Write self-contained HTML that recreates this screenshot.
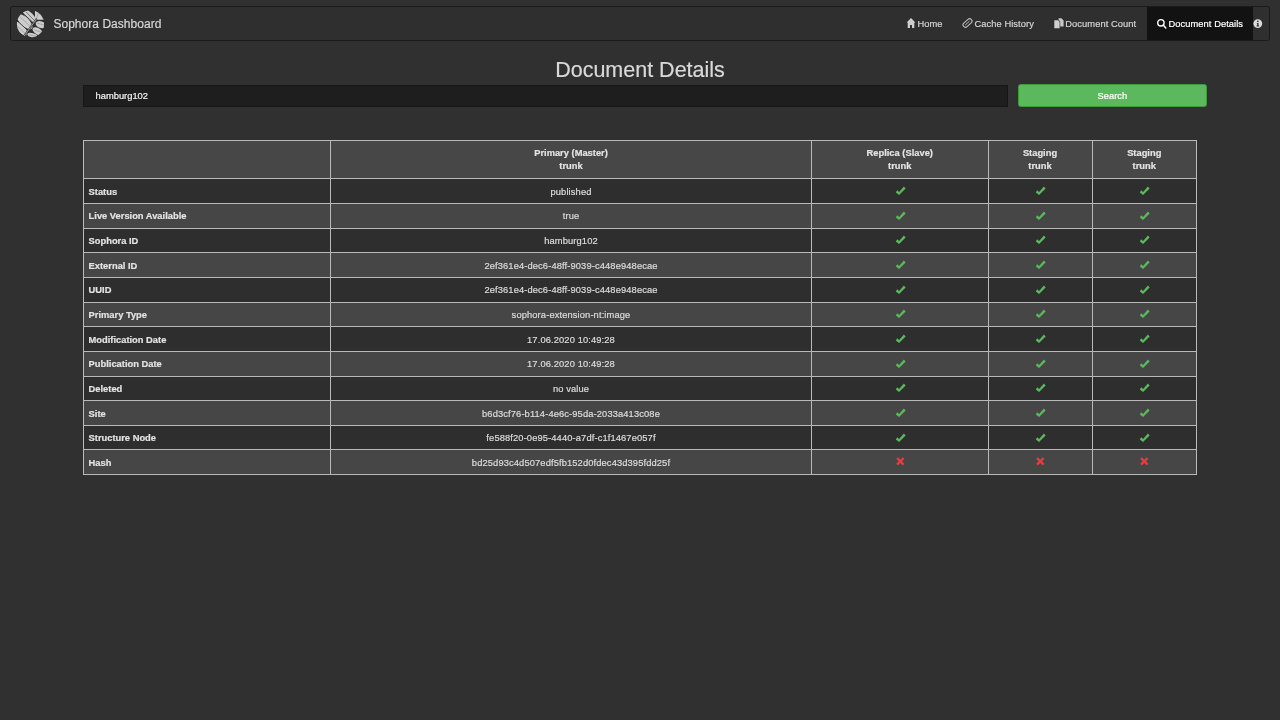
<!DOCTYPE html>
<html><head><meta charset="utf-8"><title>Sophora Dashboard</title><style>
*{margin:0;padding:0;box-sizing:border-box}
html,body{width:1280px;height:720px;overflow:hidden;background:#303030;font-family:"Liberation Sans",sans-serif}
.a{position:absolute;white-space:nowrap;-webkit-text-stroke:0.2px currentColor}
</style></head><body><div id="w" style="position:absolute;left:0;top:0;width:1280px;height:720px;will-change:transform">
<div class="a" style="left:10px;top:6px;width:1260px;height:35px;border:1px solid #1a1a1a;border-radius:2.67px;background:#2f2f2f"></div>
<div class="a" style="left:1147px;top:7px;width:106px;height:33px;background:#121212"></div>
<svg class="a" style="left:14px;top:8px" width="34" height="32" viewBox="0 0 34 32">
<defs><clipPath id="cc"><circle cx="16.5" cy="15.9" r="13.6"/></clipPath></defs>
<g clip-path="url(#cc)" stroke-linecap="round">
<g fill="#cdcdcd">
<ellipse cx="15.4" cy="7.8" rx="9" ry="3.4" transform="rotate(44 15.4 7.8)"/>
<ellipse cx="10.6" cy="13.6" rx="10" ry="4.3" transform="rotate(43 10.6 13.6)"/>
<ellipse cx="7.0" cy="20.6" rx="8.5" ry="3.9" transform="rotate(48 7.0 20.6)"/>
<path d="M21.1 11.7 L20.9 2 L32 2 L32 11.7 Z"/>
<ellipse cx="26.8" cy="16.6" rx="5.2" ry="3.3" transform="rotate(18 26.8 16.6)"/>
<ellipse cx="23.6" cy="23.2" rx="5.6" ry="3.1" transform="rotate(30 23.6 23.2)"/>
<ellipse cx="18.4" cy="27.3" rx="5" ry="2.2" transform="rotate(14 18.4 27.3)"/>
</g>
<g stroke="#2f2f2f" stroke-width="0.9" fill="none">
<path d="M7.6 4.0 L19.8 15.3"/>
<path d="M2.6 12.2 L13.8 22.6"/>
</g>
<g stroke="#5a5a5a" stroke-width="0.75" fill="none">
<path d="M12.3 4.1 L20.1 12.2"/>
</g>
<g stroke="#8a8a8a" stroke-width="0.6" fill="none">
<path d="M6.2 9.1 L16.5 18.6"/>
<path d="M2.8 17.5 L10.8 25.2"/>
<path d="M23.5 15.3 L30 17.0"/>
<path d="M20.5 22.0 L28 24.4"/>
<path d="M15.5 26.9 L22 28.3"/>
<path d="M22.3 11 L24.6 4.5"/>
</g>
<path d="M9.8 28.6 L22.3 11.2" fill="none" stroke="#2f2f2f" stroke-width="1.9"/>
<path d="M9.8 28.6 L22.3 11.2" fill="none" stroke="#bcbcbc" stroke-width="0.8"/>
</g></svg>
<div class="a" style="left:53.4px;top:16.59px;font-size:12px;line-height:14px;letter-spacing:0.04px;color:#d6d6d6">Sophora Dashboard</div>
<div class="a" style="left:917.5px;top:18.02px;font-size:9.33px;line-height:12px;letter-spacing:0.06px;color:#d2d2d2">Home</div>
<div class="a" style="left:974.5px;top:18.02px;font-size:9.33px;line-height:12px;letter-spacing:0.06px;color:#d2d2d2">Cache History</div>
<div class="a" style="left:1065.3px;top:18.02px;font-size:9.33px;line-height:12px;letter-spacing:0.06px;color:#d2d2d2">Document Count</div>
<div class="a" style="left:1168.5px;top:18.02px;font-size:9.33px;line-height:12px;letter-spacing:0.06px;color:#ffffff">Document Details</div>
<svg class="a" style="left:906px;top:18px" width="10" height="10" viewBox="0 0 10 10">
<path d="M5 0 L9.4 4.6 L8.3 4.6 L8.3 10 L6 10 L6 7 L4 7 L4 10 L1.7 10 L1.7 4.6 L0.6 4.6 Z" fill="#cfcfcf"/></svg>
<svg class="a" style="left:962px;top:17.5px" width="11" height="10" viewBox="0 0 11 10">
<g transform="rotate(-42 5.5 5)"><rect x="0.3" y="2.6" width="10.4" height="4.8" rx="2.4" fill="none" stroke="#bdbdbd" stroke-width="1.1"/>
<line x1="2.4" y1="5" x2="8.2" y2="5" stroke="#bdbdbd" stroke-width="0.9"/></g></svg>
<svg class="a" style="left:1053.5px;top:17.8px" width="10" height="11" viewBox="0 0 10 11">
<path d="M0.3 2.3 H4.2 L5.6 3.7 V10.2 H0.3 Z" fill="#d0d0d0"/>
<path d="M4.6 0.2 H7.4 L9.6 2.4 V8.4 H6.2 V3.3 L4.6 1.8 Z" fill="#c8c8c8"/></svg>
<svg class="a" style="left:1156px;top:17.5px" width="11" height="11" viewBox="0 0 11 11">
<circle cx="4.9" cy="4.8" r="3.2" fill="none" stroke="#ffffff" stroke-width="1.4"/>
<line x1="7.2" y1="7.1" x2="9.8" y2="9.9" stroke="#ffffff" stroke-width="1.5" stroke-linecap="round"/></svg>
<svg class="a" style="left:1253px;top:19px" width="10" height="10" viewBox="0 0 10 10">
<circle cx="4.8" cy="4.6" r="4.4" fill="#dcdcdc"/>
<circle cx="4.8" cy="2.4" r="0.8" fill="#2f2f2f"/>
<path d="M3.7 3.9 H5.5 V6.6 H6.1 V7.4 H3.6 V6.6 H4.2 V4.6 H3.7 Z" fill="#2f2f2f"/></svg>
<div class="a" style="left:0;width:1280px;text-align:center;top:57.51px;font-size:21.5px;line-height:24px;color:#d9d9d9;padding-left:0px">Document Details</div>
<div class="a" style="left:83px;top:84.6px;width:925px;height:22.2px;background:#1e1e1e;border:0.67px solid #161616"></div>
<div class="a" style="left:95.6px;top:89.87px;font-size:9.33px;line-height:12px;color:#f2f2f2">hamburg102</div>
<div class="a" style="left:1017.6px;top:84.3px;width:189.5px;height:22.8px;background:#5cb85c;border:0.67px solid #3f9a3f;border-radius:2.67px"></div>
<div class="a" style="left:1017.6px;width:189.5px;text-align:center;top:89.77px;font-size:9.33px;line-height:12px;color:#ffffff">Search</div>
<div class="a" style="left:83px;top:140.8px;width:1113.5px;height:37.869999999999976px;background:#474747"></div>
<div class="a" style="left:83px;top:178.67px;width:1113.5px;height:25.16px;background:#2e2e2e"></div>
<div class="a" style="left:83px;top:203.33px;width:1113.5px;height:25.16px;background:#464646"></div>
<div class="a" style="left:83px;top:227.99px;width:1113.5px;height:25.16px;background:#2e2e2e"></div>
<div class="a" style="left:83px;top:252.65px;width:1113.5px;height:25.16px;background:#464646"></div>
<div class="a" style="left:83px;top:277.31px;width:1113.5px;height:25.16px;background:#2e2e2e"></div>
<div class="a" style="left:83px;top:301.97px;width:1113.5px;height:25.16px;background:#464646"></div>
<div class="a" style="left:83px;top:326.63px;width:1113.5px;height:25.16px;background:#2e2e2e"></div>
<div class="a" style="left:83px;top:351.29px;width:1113.5px;height:25.16px;background:#464646"></div>
<div class="a" style="left:83px;top:375.95px;width:1113.5px;height:25.16px;background:#2e2e2e"></div>
<div class="a" style="left:83px;top:400.61px;width:1113.5px;height:25.16px;background:#464646"></div>
<div class="a" style="left:83px;top:425.27px;width:1113.5px;height:25.16px;background:#2e2e2e"></div>
<div class="a" style="left:83px;top:449.93px;width:1113.5px;height:25.16px;background:#464646"></div>
<div class="a" style="left:83px;top:140px;width:1114px;height:1px;background:#b9b9b9"></div>
<div class="a" style="left:83px;top:178px;width:1114px;height:1px;background:#b9b9b9"></div>
<div class="a" style="left:83px;top:203px;width:1114px;height:1px;background:#b9b9b9"></div>
<div class="a" style="left:83px;top:228px;width:1114px;height:1px;background:#b9b9b9"></div>
<div class="a" style="left:83px;top:252px;width:1114px;height:1px;background:#b9b9b9"></div>
<div class="a" style="left:83px;top:277px;width:1114px;height:1px;background:#b9b9b9"></div>
<div class="a" style="left:83px;top:302px;width:1114px;height:1px;background:#b9b9b9"></div>
<div class="a" style="left:83px;top:326px;width:1114px;height:1px;background:#b9b9b9"></div>
<div class="a" style="left:83px;top:351px;width:1114px;height:1px;background:#b9b9b9"></div>
<div class="a" style="left:83px;top:376px;width:1114px;height:1px;background:#b9b9b9"></div>
<div class="a" style="left:83px;top:400px;width:1114px;height:1px;background:#b9b9b9"></div>
<div class="a" style="left:83px;top:425px;width:1114px;height:1px;background:#b9b9b9"></div>
<div class="a" style="left:83px;top:449px;width:1114px;height:1px;background:#b9b9b9"></div>
<div class="a" style="left:83px;top:474px;width:1114px;height:1px;background:#b9b9b9"></div>
<div class="a" style="left:83px;top:140px;width:1px;height:335px;background:#b9b9b9"></div>
<div class="a" style="left:330px;top:140px;width:1px;height:335px;background:#b9b9b9"></div>
<div class="a" style="left:811px;top:140px;width:1px;height:335px;background:#b9b9b9"></div>
<div class="a" style="left:988px;top:140px;width:1px;height:335px;background:#b9b9b9"></div>
<div class="a" style="left:1092px;top:140px;width:1px;height:335px;background:#b9b9b9"></div>
<div class="a" style="left:1196px;top:140px;width:1px;height:335px;background:#b9b9b9"></div>
<div class="a" style="left:330.5px;width:481.0px;text-align:center;top:147.37px;font-size:9.33px;line-height:12px;font-weight:bold;color:#e3e3e3">Primary (Master)</div>
<div class="a" style="left:330.5px;width:481.0px;text-align:center;top:160.47px;font-size:9.33px;line-height:12px;font-weight:bold;color:#e3e3e3">trunk</div>
<div class="a" style="left:811.5px;width:176.5px;text-align:center;top:147.37px;font-size:9.33px;line-height:12px;font-weight:bold;color:#e3e3e3">Replica (Slave)</div>
<div class="a" style="left:811.5px;width:176.5px;text-align:center;top:160.47px;font-size:9.33px;line-height:12px;font-weight:bold;color:#e3e3e3">trunk</div>
<div class="a" style="left:988px;width:104px;text-align:center;top:147.37px;font-size:9.33px;line-height:12px;font-weight:bold;color:#e3e3e3">Staging</div>
<div class="a" style="left:988px;width:104px;text-align:center;top:160.47px;font-size:9.33px;line-height:12px;font-weight:bold;color:#e3e3e3">trunk</div>
<div class="a" style="left:1092px;width:104.5px;text-align:center;top:147.37px;font-size:9.33px;line-height:12px;font-weight:bold;color:#e3e3e3">Staging</div>
<div class="a" style="left:1092px;width:104.5px;text-align:center;top:160.47px;font-size:9.33px;line-height:12px;font-weight:bold;color:#e3e3e3">trunk</div>
<div class="a" style="left:88.6px;top:185.57px;font-size:9.33px;line-height:12px;font-weight:bold;color:#e3e3e3">Status</div>
<div class="a" style="left:330.5px;width:481.0px;text-align:center;top:185.57px;font-size:9.33px;line-height:12px;letter-spacing:0.12px;color:#dcdcdc">published</div>
<div class="a" style="left:894.70px;top:186.00px;width:12px;height:10px;line-height:0"><svg width="12" height="10" viewBox="0 0 12 10"><path d="M0.85 6.4 L2.15 4.2 L4.15 6.0 L8.85 0.5 L10.65 2.4 L4.05 9.1 Z" fill="#5cb85c"/></svg></div>
<div class="a" style="left:1034.95px;top:186.00px;width:12px;height:10px;line-height:0"><svg width="12" height="10" viewBox="0 0 12 10"><path d="M0.85 6.4 L2.15 4.2 L4.15 6.0 L8.85 0.5 L10.65 2.4 L4.05 9.1 Z" fill="#5cb85c"/></svg></div>
<div class="a" style="left:1139.20px;top:186.00px;width:12px;height:10px;line-height:0"><svg width="12" height="10" viewBox="0 0 12 10"><path d="M0.85 6.4 L2.15 4.2 L4.15 6.0 L8.85 0.5 L10.65 2.4 L4.05 9.1 Z" fill="#5cb85c"/></svg></div>
<div class="a" style="left:88.6px;top:210.23px;font-size:9.33px;line-height:12px;font-weight:bold;color:#e3e3e3">Live Version Available</div>
<div class="a" style="left:330.5px;width:481.0px;text-align:center;top:210.23px;font-size:9.33px;line-height:12px;letter-spacing:0.12px;color:#dcdcdc">true</div>
<div class="a" style="left:894.70px;top:210.66px;width:12px;height:10px;line-height:0"><svg width="12" height="10" viewBox="0 0 12 10"><path d="M0.85 6.4 L2.15 4.2 L4.15 6.0 L8.85 0.5 L10.65 2.4 L4.05 9.1 Z" fill="#5cb85c"/></svg></div>
<div class="a" style="left:1034.95px;top:210.66px;width:12px;height:10px;line-height:0"><svg width="12" height="10" viewBox="0 0 12 10"><path d="M0.85 6.4 L2.15 4.2 L4.15 6.0 L8.85 0.5 L10.65 2.4 L4.05 9.1 Z" fill="#5cb85c"/></svg></div>
<div class="a" style="left:1139.20px;top:210.66px;width:12px;height:10px;line-height:0"><svg width="12" height="10" viewBox="0 0 12 10"><path d="M0.85 6.4 L2.15 4.2 L4.15 6.0 L8.85 0.5 L10.65 2.4 L4.05 9.1 Z" fill="#5cb85c"/></svg></div>
<div class="a" style="left:88.6px;top:234.89px;font-size:9.33px;line-height:12px;font-weight:bold;color:#e3e3e3">Sophora ID</div>
<div class="a" style="left:330.5px;width:481.0px;text-align:center;top:234.89px;font-size:9.33px;line-height:12px;letter-spacing:0.12px;color:#dcdcdc">hamburg102</div>
<div class="a" style="left:894.70px;top:235.32px;width:12px;height:10px;line-height:0"><svg width="12" height="10" viewBox="0 0 12 10"><path d="M0.85 6.4 L2.15 4.2 L4.15 6.0 L8.85 0.5 L10.65 2.4 L4.05 9.1 Z" fill="#5cb85c"/></svg></div>
<div class="a" style="left:1034.95px;top:235.32px;width:12px;height:10px;line-height:0"><svg width="12" height="10" viewBox="0 0 12 10"><path d="M0.85 6.4 L2.15 4.2 L4.15 6.0 L8.85 0.5 L10.65 2.4 L4.05 9.1 Z" fill="#5cb85c"/></svg></div>
<div class="a" style="left:1139.20px;top:235.32px;width:12px;height:10px;line-height:0"><svg width="12" height="10" viewBox="0 0 12 10"><path d="M0.85 6.4 L2.15 4.2 L4.15 6.0 L8.85 0.5 L10.65 2.4 L4.05 9.1 Z" fill="#5cb85c"/></svg></div>
<div class="a" style="left:88.6px;top:259.55px;font-size:9.33px;line-height:12px;font-weight:bold;color:#e3e3e3">External ID</div>
<div class="a" style="left:330.5px;width:481.0px;text-align:center;top:259.55px;font-size:9.33px;line-height:12px;letter-spacing:0.12px;color:#dcdcdc">2ef361e4-dec6-48ff-9039-c448e948ecae</div>
<div class="a" style="left:894.70px;top:259.98px;width:12px;height:10px;line-height:0"><svg width="12" height="10" viewBox="0 0 12 10"><path d="M0.85 6.4 L2.15 4.2 L4.15 6.0 L8.85 0.5 L10.65 2.4 L4.05 9.1 Z" fill="#5cb85c"/></svg></div>
<div class="a" style="left:1034.95px;top:259.98px;width:12px;height:10px;line-height:0"><svg width="12" height="10" viewBox="0 0 12 10"><path d="M0.85 6.4 L2.15 4.2 L4.15 6.0 L8.85 0.5 L10.65 2.4 L4.05 9.1 Z" fill="#5cb85c"/></svg></div>
<div class="a" style="left:1139.20px;top:259.98px;width:12px;height:10px;line-height:0"><svg width="12" height="10" viewBox="0 0 12 10"><path d="M0.85 6.4 L2.15 4.2 L4.15 6.0 L8.85 0.5 L10.65 2.4 L4.05 9.1 Z" fill="#5cb85c"/></svg></div>
<div class="a" style="left:88.6px;top:284.21px;font-size:9.33px;line-height:12px;font-weight:bold;color:#e3e3e3">UUID</div>
<div class="a" style="left:330.5px;width:481.0px;text-align:center;top:284.21px;font-size:9.33px;line-height:12px;letter-spacing:0.12px;color:#dcdcdc">2ef361e4-dec6-48ff-9039-c448e948ecae</div>
<div class="a" style="left:894.70px;top:284.64px;width:12px;height:10px;line-height:0"><svg width="12" height="10" viewBox="0 0 12 10"><path d="M0.85 6.4 L2.15 4.2 L4.15 6.0 L8.85 0.5 L10.65 2.4 L4.05 9.1 Z" fill="#5cb85c"/></svg></div>
<div class="a" style="left:1034.95px;top:284.64px;width:12px;height:10px;line-height:0"><svg width="12" height="10" viewBox="0 0 12 10"><path d="M0.85 6.4 L2.15 4.2 L4.15 6.0 L8.85 0.5 L10.65 2.4 L4.05 9.1 Z" fill="#5cb85c"/></svg></div>
<div class="a" style="left:1139.20px;top:284.64px;width:12px;height:10px;line-height:0"><svg width="12" height="10" viewBox="0 0 12 10"><path d="M0.85 6.4 L2.15 4.2 L4.15 6.0 L8.85 0.5 L10.65 2.4 L4.05 9.1 Z" fill="#5cb85c"/></svg></div>
<div class="a" style="left:88.6px;top:308.87px;font-size:9.33px;line-height:12px;font-weight:bold;color:#e3e3e3">Primary Type</div>
<div class="a" style="left:330.5px;width:481.0px;text-align:center;top:308.87px;font-size:9.33px;line-height:12px;letter-spacing:0.12px;color:#dcdcdc">sophora-extension-nt:image</div>
<div class="a" style="left:894.70px;top:309.30px;width:12px;height:10px;line-height:0"><svg width="12" height="10" viewBox="0 0 12 10"><path d="M0.85 6.4 L2.15 4.2 L4.15 6.0 L8.85 0.5 L10.65 2.4 L4.05 9.1 Z" fill="#5cb85c"/></svg></div>
<div class="a" style="left:1034.95px;top:309.30px;width:12px;height:10px;line-height:0"><svg width="12" height="10" viewBox="0 0 12 10"><path d="M0.85 6.4 L2.15 4.2 L4.15 6.0 L8.85 0.5 L10.65 2.4 L4.05 9.1 Z" fill="#5cb85c"/></svg></div>
<div class="a" style="left:1139.20px;top:309.30px;width:12px;height:10px;line-height:0"><svg width="12" height="10" viewBox="0 0 12 10"><path d="M0.85 6.4 L2.15 4.2 L4.15 6.0 L8.85 0.5 L10.65 2.4 L4.05 9.1 Z" fill="#5cb85c"/></svg></div>
<div class="a" style="left:88.6px;top:333.53px;font-size:9.33px;line-height:12px;font-weight:bold;color:#e3e3e3">Modification Date</div>
<div class="a" style="left:330.5px;width:481.0px;text-align:center;top:333.53px;font-size:9.33px;line-height:12px;letter-spacing:0.12px;color:#dcdcdc">17.06.2020 10:49:28</div>
<div class="a" style="left:894.70px;top:333.96px;width:12px;height:10px;line-height:0"><svg width="12" height="10" viewBox="0 0 12 10"><path d="M0.85 6.4 L2.15 4.2 L4.15 6.0 L8.85 0.5 L10.65 2.4 L4.05 9.1 Z" fill="#5cb85c"/></svg></div>
<div class="a" style="left:1034.95px;top:333.96px;width:12px;height:10px;line-height:0"><svg width="12" height="10" viewBox="0 0 12 10"><path d="M0.85 6.4 L2.15 4.2 L4.15 6.0 L8.85 0.5 L10.65 2.4 L4.05 9.1 Z" fill="#5cb85c"/></svg></div>
<div class="a" style="left:1139.20px;top:333.96px;width:12px;height:10px;line-height:0"><svg width="12" height="10" viewBox="0 0 12 10"><path d="M0.85 6.4 L2.15 4.2 L4.15 6.0 L8.85 0.5 L10.65 2.4 L4.05 9.1 Z" fill="#5cb85c"/></svg></div>
<div class="a" style="left:88.6px;top:358.19px;font-size:9.33px;line-height:12px;font-weight:bold;color:#e3e3e3">Publication Date</div>
<div class="a" style="left:330.5px;width:481.0px;text-align:center;top:358.19px;font-size:9.33px;line-height:12px;letter-spacing:0.12px;color:#dcdcdc">17.06.2020 10:49:28</div>
<div class="a" style="left:894.70px;top:358.62px;width:12px;height:10px;line-height:0"><svg width="12" height="10" viewBox="0 0 12 10"><path d="M0.85 6.4 L2.15 4.2 L4.15 6.0 L8.85 0.5 L10.65 2.4 L4.05 9.1 Z" fill="#5cb85c"/></svg></div>
<div class="a" style="left:1034.95px;top:358.62px;width:12px;height:10px;line-height:0"><svg width="12" height="10" viewBox="0 0 12 10"><path d="M0.85 6.4 L2.15 4.2 L4.15 6.0 L8.85 0.5 L10.65 2.4 L4.05 9.1 Z" fill="#5cb85c"/></svg></div>
<div class="a" style="left:1139.20px;top:358.62px;width:12px;height:10px;line-height:0"><svg width="12" height="10" viewBox="0 0 12 10"><path d="M0.85 6.4 L2.15 4.2 L4.15 6.0 L8.85 0.5 L10.65 2.4 L4.05 9.1 Z" fill="#5cb85c"/></svg></div>
<div class="a" style="left:88.6px;top:382.85px;font-size:9.33px;line-height:12px;font-weight:bold;color:#e3e3e3">Deleted</div>
<div class="a" style="left:330.5px;width:481.0px;text-align:center;top:382.85px;font-size:9.33px;line-height:12px;letter-spacing:0.12px;color:#dcdcdc">no value</div>
<div class="a" style="left:894.70px;top:383.28px;width:12px;height:10px;line-height:0"><svg width="12" height="10" viewBox="0 0 12 10"><path d="M0.85 6.4 L2.15 4.2 L4.15 6.0 L8.85 0.5 L10.65 2.4 L4.05 9.1 Z" fill="#5cb85c"/></svg></div>
<div class="a" style="left:1034.95px;top:383.28px;width:12px;height:10px;line-height:0"><svg width="12" height="10" viewBox="0 0 12 10"><path d="M0.85 6.4 L2.15 4.2 L4.15 6.0 L8.85 0.5 L10.65 2.4 L4.05 9.1 Z" fill="#5cb85c"/></svg></div>
<div class="a" style="left:1139.20px;top:383.28px;width:12px;height:10px;line-height:0"><svg width="12" height="10" viewBox="0 0 12 10"><path d="M0.85 6.4 L2.15 4.2 L4.15 6.0 L8.85 0.5 L10.65 2.4 L4.05 9.1 Z" fill="#5cb85c"/></svg></div>
<div class="a" style="left:88.6px;top:407.51px;font-size:9.33px;line-height:12px;font-weight:bold;color:#e3e3e3">Site</div>
<div class="a" style="left:330.5px;width:481.0px;text-align:center;top:407.51px;font-size:9.33px;line-height:12px;letter-spacing:0.12px;color:#dcdcdc">b6d3cf76-b114-4e6c-95da-2033a413c08e</div>
<div class="a" style="left:894.70px;top:407.94px;width:12px;height:10px;line-height:0"><svg width="12" height="10" viewBox="0 0 12 10"><path d="M0.85 6.4 L2.15 4.2 L4.15 6.0 L8.85 0.5 L10.65 2.4 L4.05 9.1 Z" fill="#5cb85c"/></svg></div>
<div class="a" style="left:1034.95px;top:407.94px;width:12px;height:10px;line-height:0"><svg width="12" height="10" viewBox="0 0 12 10"><path d="M0.85 6.4 L2.15 4.2 L4.15 6.0 L8.85 0.5 L10.65 2.4 L4.05 9.1 Z" fill="#5cb85c"/></svg></div>
<div class="a" style="left:1139.20px;top:407.94px;width:12px;height:10px;line-height:0"><svg width="12" height="10" viewBox="0 0 12 10"><path d="M0.85 6.4 L2.15 4.2 L4.15 6.0 L8.85 0.5 L10.65 2.4 L4.05 9.1 Z" fill="#5cb85c"/></svg></div>
<div class="a" style="left:88.6px;top:432.17px;font-size:9.33px;line-height:12px;font-weight:bold;color:#e3e3e3">Structure Node</div>
<div class="a" style="left:330.5px;width:481.0px;text-align:center;top:432.17px;font-size:9.33px;line-height:12px;letter-spacing:0.12px;color:#dcdcdc">fe588f20-0e95-4440-a7df-c1f1467e057f</div>
<div class="a" style="left:894.70px;top:432.60px;width:12px;height:10px;line-height:0"><svg width="12" height="10" viewBox="0 0 12 10"><path d="M0.85 6.4 L2.15 4.2 L4.15 6.0 L8.85 0.5 L10.65 2.4 L4.05 9.1 Z" fill="#5cb85c"/></svg></div>
<div class="a" style="left:1034.95px;top:432.60px;width:12px;height:10px;line-height:0"><svg width="12" height="10" viewBox="0 0 12 10"><path d="M0.85 6.4 L2.15 4.2 L4.15 6.0 L8.85 0.5 L10.65 2.4 L4.05 9.1 Z" fill="#5cb85c"/></svg></div>
<div class="a" style="left:1139.20px;top:432.60px;width:12px;height:10px;line-height:0"><svg width="12" height="10" viewBox="0 0 12 10"><path d="M0.85 6.4 L2.15 4.2 L4.15 6.0 L8.85 0.5 L10.65 2.4 L4.05 9.1 Z" fill="#5cb85c"/></svg></div>
<div class="a" style="left:88.6px;top:456.83px;font-size:9.33px;line-height:12px;font-weight:bold;color:#e3e3e3">Hash</div>
<div class="a" style="left:330.5px;width:481.0px;text-align:center;top:456.83px;font-size:9.33px;line-height:12px;letter-spacing:0.12px;color:#dcdcdc">bd25d93c4d507edf5fb152d0fdec43d395fdd25f</div>
<div class="a" style="left:895.70px;top:457.26px;width:9px;height:9px;line-height:0"><svg width="9" height="9" viewBox="0 0 9 9"><path d="M0.2 1.8 L1.8 0.2 L4.3 2.7 L6.8 0.2 L8.4 1.8 L5.9 4.3 L8.4 6.8 L6.8 8.4 L4.3 5.9 L1.8 8.4 L0.2 6.8 L2.7 4.3 Z" fill="#e0403e"/></svg></div>
<div class="a" style="left:1035.95px;top:457.26px;width:9px;height:9px;line-height:0"><svg width="9" height="9" viewBox="0 0 9 9"><path d="M0.2 1.8 L1.8 0.2 L4.3 2.7 L6.8 0.2 L8.4 1.8 L5.9 4.3 L8.4 6.8 L6.8 8.4 L4.3 5.9 L1.8 8.4 L0.2 6.8 L2.7 4.3 Z" fill="#e0403e"/></svg></div>
<div class="a" style="left:1140.20px;top:457.26px;width:9px;height:9px;line-height:0"><svg width="9" height="9" viewBox="0 0 9 9"><path d="M0.2 1.8 L1.8 0.2 L4.3 2.7 L6.8 0.2 L8.4 1.8 L5.9 4.3 L8.4 6.8 L6.8 8.4 L4.3 5.9 L1.8 8.4 L0.2 6.8 L2.7 4.3 Z" fill="#e0403e"/></svg></div>
</div></body></html>
